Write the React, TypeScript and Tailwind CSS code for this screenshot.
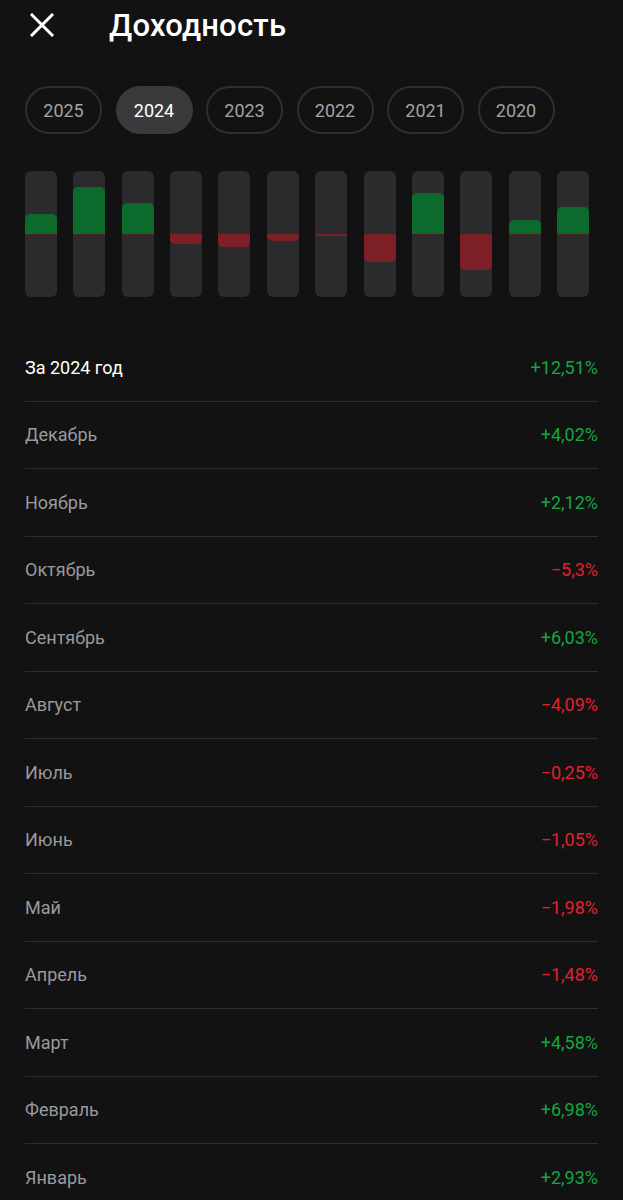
import React from 'react';

const years = ['2025', '2024', '2023', '2022', '2021', '2020'];

// January..December, as drawn in the chart
const months: { name: string; value: number }[] = [
    { name: 'Январь', value: 2.93 },
    { name: 'Февраль', value: 6.98 },
    { name: 'Март', value: 4.58 },
    { name: 'Апрель', value: -1.48 },
    { name: 'Май', value: -1.98 },
    { name: 'Июнь', value: -1.05 },
    { name: 'Июль', value: -0.25 },
    { name: 'Август', value: -4.09 },
    { name: 'Сентябрь', value: 6.03 },
    { name: 'Октябрь', value: -5.3 },
    { name: 'Ноябрь', value: 2.12 },
    { name: 'Декабрь', value: 4.02 },
];

const fmt = (v: number) => {
    const s = Math.abs(v).toFixed(2).replace(/0$/, '').replace('.', ',');
    return (v >= 0 ? '+' : '−') + s + '%';
};

const Bar: React.FC<{ value: number }> = ({ value }) => {
    const h = Math.max(Math.abs(value) * 6.8, 1.5);
    return (
        <div className="w-[32px] h-[126px] rounded-[6px] bg-[#2b2b2d] flex flex-col overflow-hidden">
            <div className="h-[63px] flex flex-col justify-end">
                {value > 0 && <div className="bg-[#0b6a2c] rounded-t-[5px]" style={{ height: h }} />}
            </div>
            <div className="h-px bg-[#4a2226]" />
            <div className="flex-1 -mt-px">
                {value < 0 && <div className="bg-[#7c1f26] rounded-b-[5px]" style={{ height: h }} />}
            </div>
        </div>
    );
};

const Row: React.FC<{ label: string; value: number; strong?: boolean }> = ({ label, value, strong }) => (
    <div className="h-[67.5px] flex items-center justify-between border-b border-[#2e2e30] last:border-b-0">
        <span className={strong ? 'text-[18px] text-white' : 'text-[18px] text-[#9a9a9e]'}>{label}</span>
        <span className={value >= 0 ? 'text-[18px] text-[#16a544]' : 'text-[18px] text-[#e3202c]'}>{fmt(value)}</span>
    </div>
);

const App: React.FC = () => {
    return (
        <div className="w-[623px] h-[1200px] overflow-hidden bg-[#121212] text-white" style={{ fontFamily: 'Roboto, "Noto Sans", sans-serif' }}>
            <div className="flex items-center h-[52px] pl-[30px]">
                <svg width="24" height="24" viewBox="0 0 24 24" className="mt-[-2px]">
                    <path d="M2 2 L22 22 M22 2 L2 22" stroke="#fff" strokeWidth="3" strokeLinecap="square" />
                </svg>
                <h1 className="ml-[55px] text-[31px] font-medium tracking-[0.2px]">Доходность</h1>
            </div>

            <div className="flex gap-[13.5px] px-[25px] mt-[34px]">
                {years.map(y => (
                    <div
                        key={y}
                        className={
                            y === '2024'
                                ? 'w-[77px] h-[48px] rounded-full bg-[#3a3a3c] border border-[#3a3a3c] flex items-center justify-center text-[18px] text-white'
                                : 'w-[77px] h-[48px] rounded-full border-2 border-[#2f2f31] flex items-center justify-center text-[18px] text-[#a3a3a7]'
                        }
                    >
                        {y}
                    </div>
                ))}
            </div>

            <div className="flex justify-between px-[25px] pr-[34px] mt-[37px]">
                {months.map(m => (
                    <Bar key={m.name} value={m.value} />
                ))}
            </div>

            <div className="px-[25px] mt-[37px]">
                <Row label="За 2024 год" value={12.51} strong />
                {[...months].reverse().map(m => (
                    <Row key={m.name} label={m.name} value={m.value} />
                ))}
            </div>
        </div>
    );
};

export default App;
